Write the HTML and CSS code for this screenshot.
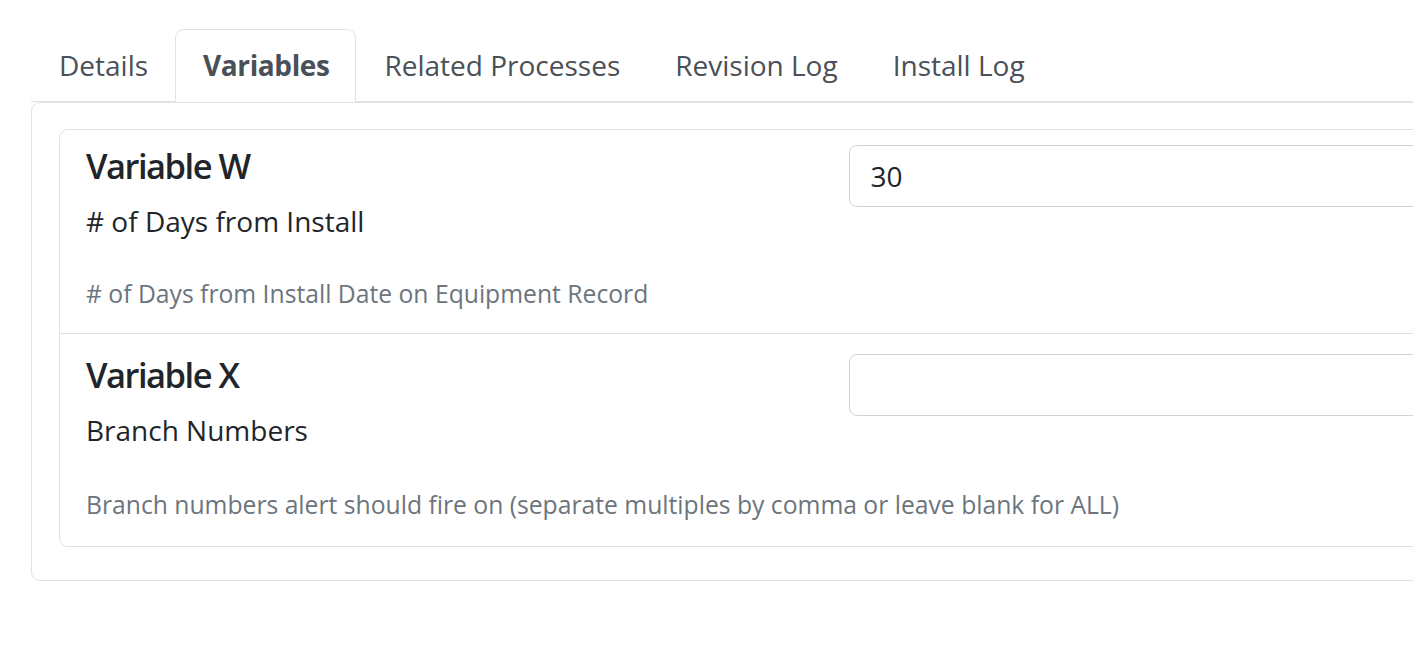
FILE: index.html
```html
<!DOCTYPE html>
<html lang="en">
<head>
  <meta charset="UTF-8">
  <meta name="viewport" content="width=device-width,initial-scale=1">
  <title>Alert Variables</title>
  <link rel="stylesheet" href="styles.css">
</head>
<body>
  <div class="page">

    <!-- Tabs -->
    <ul class="nav-tabs">
      <li><a class="nav-link" href="#">Details</a></li>
      <li><a class="nav-link active" href="#">Variables</a></li>
      <li><a class="nav-link" href="#">Related Processes</a></li>
      <li><a class="nav-link" href="#">Revision Log</a></li>
      <li><a class="nav-link" href="#">Install Log</a></li>
    </ul>

    <!-- Variables panel -->
    <div class="tab-pane">
      <div class="var-list">
        <div class="var-item first">
          <div class="var-info">
            <h5 class="var-title">Variable W</h5>
            <label class="var-label" for="varW"># of Days from Install</label>
          </div>
          <div>
            <input id="varW" class="form-control" type="text" value="30">
          </div>
          <div class="form-text"># of Days from Install Date on Equipment Record</div>
        </div>

        <div class="var-item second">
          <div class="var-info">
            <h5 class="var-title">Variable X</h5>
            <label class="var-label" for="varX">Branch Numbers</label>
          </div>
          <div>
            <input id="varX" class="form-control" type="text" value="">
          </div>
          <div class="form-text">Branch numbers alert should fire on (separate multiples by comma or leave blank for ALL)</div>
        </div>
      </div>
    </div>

  </div>
</body>
</html>
```

FILE: styles.css
```css
html, body { overflow:hidden; }
body {
  margin:0; background:#fff; color:#212529;
  font-family:"Open Sans","Noto Sans",Arial,sans-serif;
  font-size:28px; line-height:1.5;
}
.page{
  width:1593px;
  padding:29px 0 0 31px;
}

/* tabs */
.nav-tabs{
  display:flex; list-style:none; margin:0; padding:0;
  border-bottom:1px solid #dee2e6;
}
.nav-tabs li{ margin-bottom:-1px; }
.nav-link{
  display:block; padding:14px 26px 15px 27px;
  color:#495057; text-decoration:none;
  border:1px solid transparent;
  border-top-left-radius:9px; border-top-right-radius:9px;
}
.nav-link.active{
  font-weight:700; letter-spacing:-0.4px;
  background:#fff;
  border-color:#dee2e6 #dee2e6 #fff;
}

/* panel */
.tab-pane{
  border:1px solid #dee2e6; border-radius:9px;
  padding:26px 27px 33px;
}
.var-list{
  border:1px solid #dee2e6; border-radius:9px;
}
.var-item{
  display:grid; grid-template-columns:1fr 1fr; column-gap:42px;
  padding:15px 26px 21px;
}
.var-item.second{
  border-top:1px solid #dee2e6;
  padding:20px 26px 23px;
}
.var-item.second .form-text{ margin-top:35px; }
.var-info{ display:flex; flex-direction:column; }
.var-title{
  margin:0 0 13px; font-size:34.5px; font-weight:600; line-height:1.22;
  letter-spacing:-1.5px;
}
.var-label{ display:block; }
.form-text{
  grid-column:1 / -1;
  margin-top:33px; color:#6c757d; font-size:24.7px;
}
.form-control{
  display:block; box-sizing:border-box; width:100%; height:62px;
  padding:9px 21px; margin:0;
  font:inherit; color:#212529;
  border:1px solid #ced4da; border-radius:8px; background:#fff;
}
```
